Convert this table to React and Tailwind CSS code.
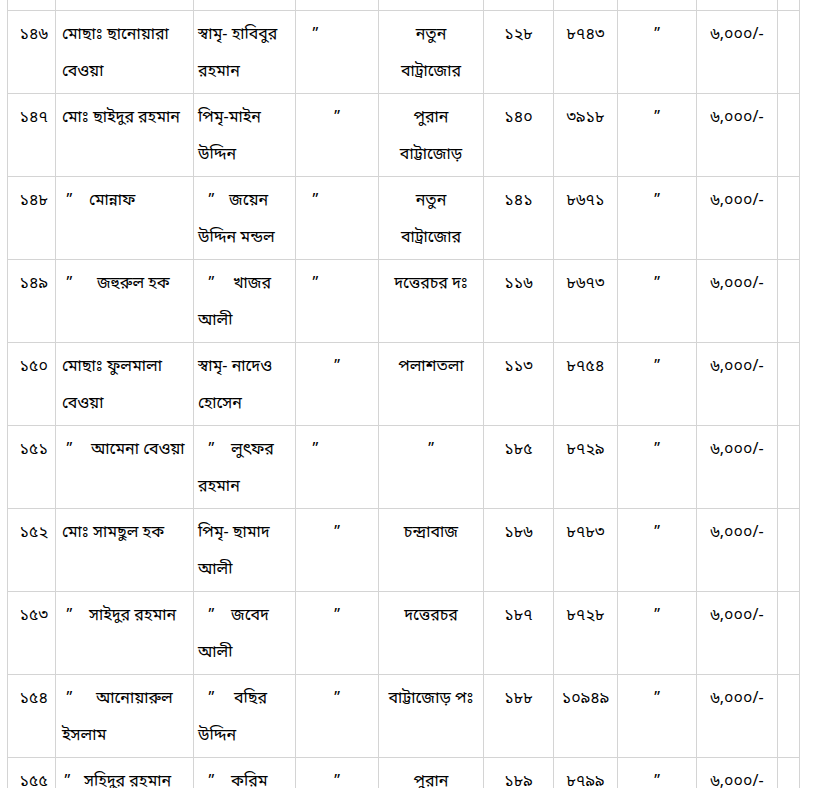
const rows = [
  {
    sl: "১৪৬",
    name: [[null, "মোছাঃ ছানোয়ারা"], [null, "বেওয়া"]],
    father: [[null, "স্বামৃ- হাবিবুর"], [null, "রহমান"]],
    q: "left",
    village: ["নতুন", "বাট্রাজোর"],
    khatian: "১২৮",
    dag: "৮৭৪৩",
  },
  {
    sl: "১৪৭",
    name: [[null, "মোঃ ছাইদুর রহমান"]],
    father: [[null, "পিমৃ-মাইন"], [null, "উদ্দিন"]],
    q: "center",
    village: ["পুরান", "বাট্টাজোড়"],
    khatian: "১৪০",
    dag: "৩৯১৮",
  },
  {
    sl: "১৪৮",
    name: [["w-[27px]", "মোন্নাফ"]],
    father: [["w-[31px]", "জয়েন"], [null, "উদ্দিন মন্ডল"]],
    q: "left",
    village: ["নতুন", "বাট্রাজোর"],
    khatian: "১৪১",
    dag: "৮৬৭১",
  },
  {
    sl: "১৪৯",
    name: [["w-[35px]", "জহুরুল হক"]],
    father: [["w-[35px]", "খাজর"], [null, "আলী"]],
    q: "left",
    village: ["দত্তেরচর দঃ"],
    khatian: "১১৬",
    dag: "৮৬৭৩",
  },
  {
    sl: "১৫০",
    name: [[null, "মোছাঃ ফুলমালা"], [null, "বেওয়া"]],
    father: [[null, "স্বামৃ- নাদেও"], [null, "হোসেন"]],
    q: "center",
    village: ["পলাশতলা"],
    khatian: "১১৩",
    dag: "৮৭৫৪",
  },
  {
    sl: "১৫১",
    name: [["w-[29px]", "আমেনা বেওয়া"]],
    father: [["w-[33px]", "লুৎফর"], [null, "রহমান"]],
    q: "left",
    village: ["”"],
    khatian: "১৮৫",
    dag: "৮৭২৯",
  },
  {
    sl: "১৫২",
    name: [[null, "মোঃ সামছুল হক"]],
    father: [[null, "পিমৃ- ছামাদ"], [null, "আলী"]],
    q: "center",
    village: ["চন্দ্রাবাজ"],
    khatian: "১৮৬",
    dag: "৮৭৮৩",
  },
  {
    sl: "১৫৩",
    name: [["w-[27px]", "সাইদুর রহমান"]],
    father: [["w-[33px]", "জবেদ"], [null, "আলী"]],
    q: "center",
    village: ["দত্তেরচর"],
    khatian: "১৮৭",
    dag: "৮৭২৮",
  },
  {
    sl: "১৫৪",
    name: [["w-[34px]", "আনোয়ারুল"], [null, "ইসলাম"]],
    father: [["w-[36px]", "বছির"], [null, "উদ্দিন"]],
    q: "center",
    village: ["বাট্টাজোড় পঃ"],
    khatian: "১৮৮",
    dag: "১০৯৪৯",
  },
  {
    sl: "১৫৫",
    name: [["w-[22px] !pl-[2px]", "সহিদুর রহমান"]],
    father: [["w-[33px]", "করিম"]],
    q: "center",
    village: ["পুরান"],
    khatian: "১৮৯",
    dag: "৮৭৯৯",
  },
];

const cell = "border-l border-b border-[#d4d4d4] align-top pt-[6px] pb-0 leading-[37px]";

function Line({ ditto, text, quotePad }) {
  return (
    <div className="whitespace-nowrap">
      {ditto && <span className={`inline-block ${quotePad} ${ditto}`}>”</span>}
      {text}
    </div>
  );
}

export default function App() {
  return (
    <div className="w-[819px] h-[788px] overflow-hidden bg-white pl-[7px] text-[16px] text-black font-['Noto_Sans_Bengali','Noto_Serif_Bengali','Lohit_Bengali','FreeSerif',sans-serif]">
      <table className="border-collapse table-fixed w-[792px]">
        <colgroup>
          <col className="w-[48px]" />
          <col className="w-[138px]" />
          <col className="w-[102px]" />
          <col className="w-[83px]" />
          <col className="w-[105px]" />
          <col className="w-[70px]" />
          <col className="w-[64px]" />
          <col className="w-[79px]" />
          <col className="w-[81px]" />
          <col className="w-[22px]" />
        </colgroup>
        <tbody>
          <tr className="h-[10px]">
            {Array.from({ length: 10 }).map((_, i) => (
              <td
                key={i}
                className={`border-l border-b border-[#d4d4d4] p-0 ${i === 9 ? "border-r" : ""}`}
              />
            ))}
          </tr>
          {rows.map((r) => (
            <tr key={r.sl} className="h-[83px]">
              <td className={`${cell} text-right pr-[7px]`}>{r.sl}</td>
              <td className={`${cell} pl-[6px]`}>
                {r.name.map(([d, t], i) => (
                  <Line key={i} ditto={d} text={t} quotePad="pl-[4px]" />
                ))}
              </td>
              <td className={`${cell} pl-[4px]`}>
                {r.father.map(([d, t], i) => (
                  <Line key={i} ditto={d} text={t} quotePad="pl-[10px]" />
                ))}
              </td>
              <td className={`${cell} ${r.q === "left" ? "pl-[16px]" : "text-center"}`}>”</td>
              <td className={`${cell} text-center whitespace-nowrap`}>
                {r.village.map((l, i) => (
                  <div key={i}>{l}</div>
                ))}
              </td>
              <td className={`${cell} text-center`}>{r.khatian}</td>
              <td className={`${cell} text-center`}>{r.dag}</td>
              <td className={`${cell} text-center`}>”</td>
              <td className={`${cell} text-center`}>৬,০০০/-</td>
              <td className={`${cell} border-r`}></td>
            </tr>
          ))}
        </tbody>
      </table>
    </div>
  );
}
